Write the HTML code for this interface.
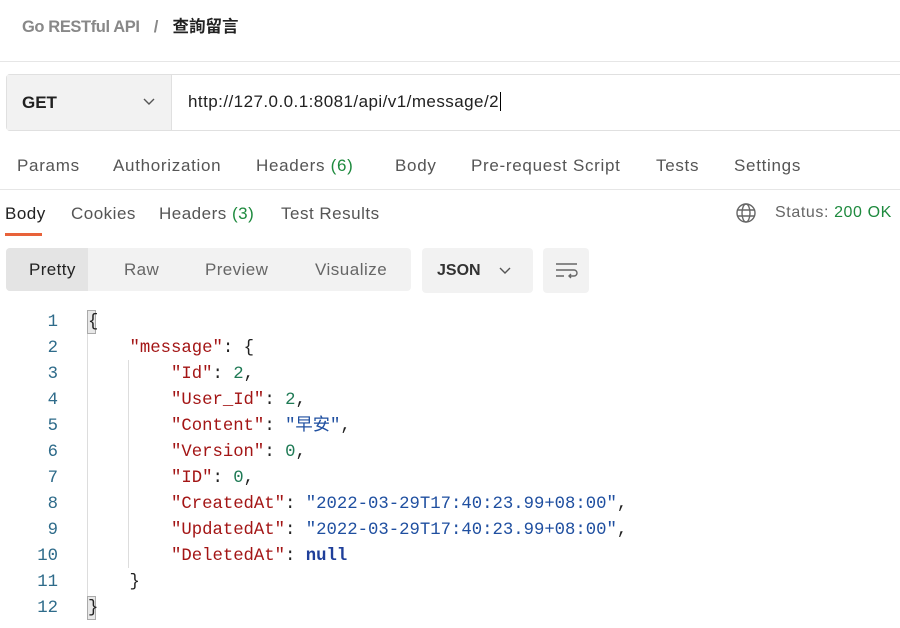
<!DOCTYPE html>
<html><head><meta charset="utf-8"><style>
*{margin:0;padding:0;box-sizing:border-box}
body{width:900px;height:628px;background:#fff;font-family:"Liberation Sans","Noto Sans CJK TC",sans-serif;color:#212121;position:relative;overflow:hidden}
.a{position:absolute;white-space:nowrap}
.g{color:#1e8a3e}
.t{letter-spacing:0.7px}
.code{position:absolute;left:0;top:310px;font-family:"Liberation Mono","Noto Sans CJK TC",monospace;font-size:17.3px;}
.ln{position:absolute;height:26px;line-height:26px;white-space:pre}
.num{color:#2e6b8a;text-align:right;width:58px;left:0}
.k{color:#a31515}.n{color:#1f7a55}.s{color:#1f4fa0}.nl{color:#1f3f9a;font-weight:bold}
</style></head><body>
<div class="a" style="left:22px;top:14px;height:26px;line-height:26px;font-size:16.5px;font-weight:bold;color:#888"><span style="letter-spacing:-0.4px">Go RESTful API</span><span style="display:inline-block;width:33px;text-align:center">/</span><span style="color:#222">查詢留言</span></div>
<div class="a" style="left:0;top:61px;width:900px;height:1px;background:#e6e6e6"></div>
<div class="a" style="left:6px;top:74px;width:900px;height:57px;border:1px solid #e0e0e0;border-radius:4px;background:#fff"></div>
<div class="a" style="left:7px;top:75px;width:165px;height:55px;background:#f2f2f2;border-right:1px solid #e0e0e0"></div>
<div class="a" style="left:22px;top:93px;font-size:17px;font-weight:bold">GET</div>
<svg class="a" style="left:143px;top:98px" width="12" height="8"><path d="M1 1L6 6L11 1" stroke="#555" stroke-width="1.4" fill="none"/></svg>
<div class="a" style="left:188px;top:92px;font-size:17px;letter-spacing:0.45px">http://127.0.0.1:8081/api/v1/message/2<span style="border-left:1px solid #000;margin-left:1px"></span></div>
<div class="a t" style="top:156px;font-size:17px;color:#555;left:17px">Params</div>
<div class="a t" style="top:156px;font-size:17px;color:#555;left:113px">Authorization</div>
<div class="a t" style="top:156px;font-size:17px;color:#555;left:256px">Headers <span class="g">(6)</span></div>
<div class="a t" style="top:156px;font-size:17px;color:#555;left:395px">Body</div>
<div class="a t" style="top:156px;font-size:17px;color:#555;left:471px">Pre-request Script</div>
<div class="a t" style="top:156px;font-size:17px;color:#555;left:656px">Tests</div>
<div class="a t" style="top:156px;font-size:17px;color:#555;left:734px">Settings</div>
<div class="a" style="left:0;top:189px;width:900px;height:1px;background:#e6e6e6"></div>
<div class="a" style="top:204px;font-size:17px;color:#222;left:5px;letter-spacing:0.5px">Body</div>
<div class="a" style="left:5px;top:233px;width:37px;height:3px;background:#e8623a"></div>
<div class="a" style="top:204px;font-size:17px;color:#555;left:71px;letter-spacing:0.5px">Cookies</div>
<div class="a" style="top:204px;font-size:17px;color:#555;left:159px;letter-spacing:0.5px">Headers <span class="g">(3)</span></div>
<div class="a" style="top:204px;font-size:17px;color:#555;left:281px;letter-spacing:0.5px">Test Results</div>
<svg class="a" style="left:736px;top:203px" width="20" height="20" viewBox="0 0 20 20"><g stroke="#666" stroke-width="1.4" fill="none"><circle cx="10" cy="10" r="9"/><ellipse cx="10" cy="10" rx="4" ry="9"/><path d="M1 7H19M1 13H19"/></g></svg>
<div class="a" style="top:204px;font-size:16px;color:#666;left:775px;letter-spacing:0.6px">Status: <span class="g">200 OK</span></div>
<div class="a" style="left:6px;top:248px;width:405px;height:43px;background:#f2f2f2;border-radius:4px"></div>
<div class="a" style="left:6px;top:248px;width:82px;height:43px;background:#e4e4e4;border-radius:4px 0 0 4px"></div>
<div class="a" style="top:260px;font-size:17px;left:29px;color:#222;letter-spacing:0.4px">Pretty</div>
<div class="a" style="top:260px;font-size:17px;left:124px;color:#666;letter-spacing:0.4px">Raw</div>
<div class="a" style="top:260px;font-size:17px;left:205px;color:#666;letter-spacing:0.4px">Preview</div>
<div class="a" style="top:260px;font-size:17px;left:315px;color:#666;letter-spacing:0.5px">Visualize</div>
<div class="a" style="left:422px;top:248px;width:111px;height:45px;background:#f2f2f2;border-radius:4px"></div>
<div class="a" style="top:262px;font-size:16px;left:437px;font-weight:bold;color:#333">JSON</div>
<svg class="a" style="left:499px;top:267px" width="12" height="8"><path d="M1 1L6 6L11 1" stroke="#555" stroke-width="1.4" fill="none"/></svg>
<div class="a" style="left:543px;top:248px;width:46px;height:45px;background:#f2f2f2;border-radius:4px"></div>
<svg class="a" style="left:555px;top:261px" width="24" height="20" viewBox="0 0 24 20"><g stroke="#666" stroke-width="1.4" fill="none"><path d="M1 3H22M1 9H19a3 3 0 0 1 0 6H14M16 13l-2 2 2 2M1 15H9"/></g></svg>
<div class="a" style="left:87px;top:310px;width:9px;height:24px;background:#e8e8e8;border:1px solid #aaa"></div>
<div class="a" style="left:87px;top:596px;width:9px;height:24px;background:#e8e8e8;border:1px solid #aaa"></div>
<div class="a" style="left:87px;top:334px;width:1px;height:262px;background:#ddd"></div>
<div class="a" style="left:128px;top:360px;width:1px;height:208px;background:#ddd"></div>
<div class="code">
<div class="ln num" style="top:0">1</div><div class="ln" style="top:0;left:88px">{</div>
<div class="ln num" style="top:26px">2</div><div class="ln" style="top:26px;left:88px">    <span class="k">"message"</span>: {</div>
<div class="ln num" style="top:52px">3</div><div class="ln" style="top:52px;left:88px">        <span class="k">"Id"</span>: <span class="n">2</span>,</div>
<div class="ln num" style="top:78px">4</div><div class="ln" style="top:78px;left:88px">        <span class="k">"User_Id"</span>: <span class="n">2</span>,</div>
<div class="ln num" style="top:104px">5</div><div class="ln" style="top:104px;left:88px">        <span class="k">"Content"</span>: <span class="s">"早安"</span>,</div>
<div class="ln num" style="top:130px">6</div><div class="ln" style="top:130px;left:88px">        <span class="k">"Version"</span>: <span class="n">0</span>,</div>
<div class="ln num" style="top:156px">7</div><div class="ln" style="top:156px;left:88px">        <span class="k">"ID"</span>: <span class="n">0</span>,</div>
<div class="ln num" style="top:182px">8</div><div class="ln" style="top:182px;left:88px">        <span class="k">"CreatedAt"</span>: <span class="s">"2022-03-29T17:40:23.99+08:00"</span>,</div>
<div class="ln num" style="top:208px">9</div><div class="ln" style="top:208px;left:88px">        <span class="k">"UpdatedAt"</span>: <span class="s">"2022-03-29T17:40:23.99+08:00"</span>,</div>
<div class="ln num" style="top:234px">10</div><div class="ln" style="top:234px;left:88px">        <span class="k">"DeletedAt"</span>: <span class="nl">null</span></div>
<div class="ln num" style="top:260px">11</div><div class="ln" style="top:260px;left:88px">    }</div>
<div class="ln num" style="top:286px">12</div><div class="ln" style="top:286px;left:88px">}</div>
</div>
</body></html>
